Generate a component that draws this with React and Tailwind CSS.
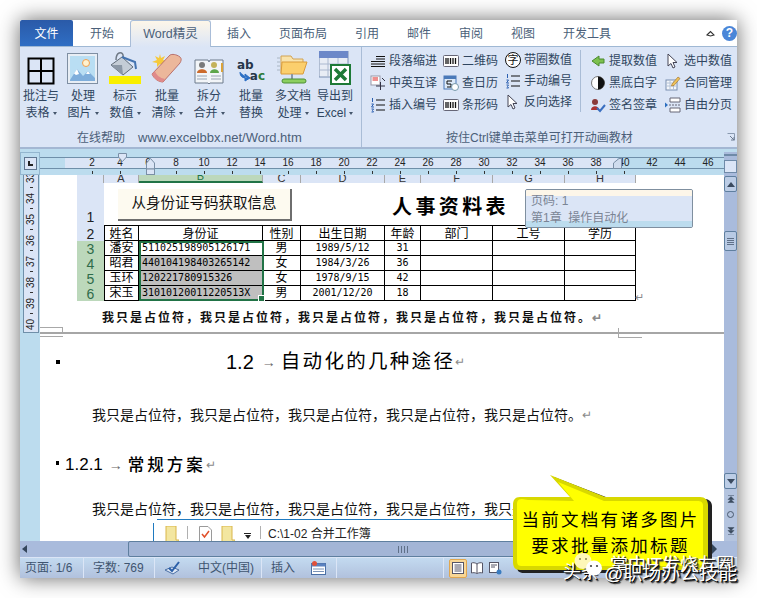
import React from "react";

const Grid = () => (
  <svg width="28" height="28" viewBox="0 0 28 28"><rect x="1.500" y="1.500" width="25" height="25" fill="none" stroke="#000" strokeWidth="2"/><path d="M14 1.500V26.500M1.500 14H26.500" stroke="#000" strokeWidth="2"/></svg>
);
const Pic = () => (
  <svg width="32" height="32" viewBox="0 0 32 32"><rect x=".5" y=".5" width="30" height="30" fill="#e8eef5" stroke="#7f8fa3"/><rect x="3" y="3" width="25" height="25" fill="#b9def3"/><circle cx="19" cy="10" r="3.500" fill="#fff3d0" stroke="#f0a050"/><path d="M3 27L10 16L16 23L21 18L28 25V28H3Z" fill="#7faedb"/><path d="M10 16L12 21L9 22L7 20.500ZM21 18L23 21L19 21Z" fill="#fff"/></svg>
);
const Bucket = () => (
  <svg width="34" height="34" viewBox="0 0 34 34"><path d="M8 9C8 1 14 0 15 4L16 12" fill="none" stroke="#707a86" strokeWidth="1.500"/><path d="M3 14L14 6L25 16L15 24Z" fill="#c4ccd6" stroke="#5f6b78"/><path d="M3 14L15 24L14 14Z" fill="#8b97a6"/><path d="M14 6L27 11L28 18" fill="none" stroke="#4473b0" strokeWidth="2"/><rect x="1" y="25" width="32" height="8" fill="#f9ef00"/></svg>
);
const Eraser = () => (
  <svg width="34" height="32" viewBox="0 0 34 32"><path d="M10 1L11 5L15 3L13 7L17 8L13 10L14 14L10 11L7 14L7 10L2 9L7 7L5 3L9 5Z" fill="#f6c93a"/><path d="M2 21L20 2C22 1 26 1 30 4C32 6 31 8 30 10L13 29C9 29 4 26 2 21Z" fill="#ecb79b" stroke="#b9706c"/><path d="M2 21C4 26 9 29 13 29L15 26C10 25 6 22 5 18Z" fill="#e08a8a"/></svg>
);
const Book = () => (
  <svg width="30" height="28" viewBox="0 0 30 28"><path d="M1 3H14L15 5L16 3H29V26H16L15 27L14 26H1Z" fill="#f2f5f8" stroke="#6d7a8c"/><circle cx="8" cy="8" r="3" fill="#7a7a7a"/><path d="M3 16C3 11 13 11 13 16Z" fill="#cc6a2b"/><circle cx="20" cy="8" r="3" fill="#c4b35a"/><path d="M16 16C16 11 25 11 25 16Z" fill="#5da64a"/><path d="M3 19H13M3 22H13M17 19H27M17 22H27" stroke="#9aa5b3"/><rect x="27" y="6" width="2" height="9" fill="#d9a23a"/></svg>
);
const Replace = () => (
  <div className="relative w-[28px] h-[28px] text-[#26364a] font-bold leading-none">
    <span className="absolute left-0 top-[2px] text-[12px] font-['DejaVu_Sans']">ab</span>
    <span className="absolute right-0 bottom-[3px] text-[12px] font-['DejaVu_Sans']">a<span className="text-[#2d7a3a]">c</span></span>
    <svg className="absolute left-[2px] top-[15px]" width="12" height="10" viewBox="0 0 12 10"><path d="M1 0C1 5 4 6 8 6M6 2L11 6L6 9Z" fill="#2c6fc4" stroke="#2c6fc4"/></svg>
  </div>
);
const FolderNet = () => (
  <svg width="32" height="32" viewBox="0 0 32 32"><path d="M4 3H14L16 6H26V20H4Z" fill="#f9e3ab" stroke="#d1a354"/><path d="M5 9H30L26 21H4Z" fill="#fbcf6d" stroke="#d99b3b"/><path d="M15 21V26" stroke="#8a97a6" strokeWidth="2"/><rect x="5" y="26" width="24" height="4" rx="2" fill="#8ccf60" stroke="#4d8f34"/><path d="M0 5H3M0 9H3M0 13H3M0 17H3" stroke="#a9b6c4"/></svg>
);
const XlsTable = () => (
  <svg width="32" height="34" viewBox="0 0 32 34"><rect x="0" y="0" width="29" height="26" fill="#e8edf5" stroke="#7a8fb2"/><rect x="0" y="0" width="29" height="7" fill="#6c88c8"/><path d="M0 13H29M0 19H29M9 7V26M19 7V26" stroke="#aab8cf"/><rect x="12" y="14" width="19" height="19" fill="#fff" stroke="#1e7a37" strokeWidth="2"/><path d="M16 18L27 29M27 18L16 29" stroke="#1e7a37" strokeWidth="3.500"/></svg>
);

const S = ({ children }) => <svg width="16" height="16" viewBox="0 0 16 16">{children}</svg>;
const Lines = () => <S><path d="M6 3.500H15M6 6H15M1 8.500H15M1 11H15M1 13.500H15" stroke="#111"/></S>;
const Barcode = () => <S><rect x=".5" y="2.500" width="15" height="11" rx="1" fill="#fff" stroke="#667"/><path d="M3 5V11M5 5V11M7.500 5V11M10 5V11M12.500 5V11" stroke="#111" strokeWidth="1.300"/></S>;
const Circled = () => (
  <div className="w-[16px] h-[16px] rounded-full border border-[#111] flex items-center justify-center text-[11px] leading-none text-[#111] bg-white">字</div>
);
const Trans = () => <S><rect x="1" y="1" width="9" height="9" fill="#fff" stroke="#99a"/><path d="M2.500 3H8M2.500 5H8" stroke="#d22"/><path d="M6 11H15M10.500 7V15M12 3L15 6" stroke="#334"/></S>;
const Calendar = () => <S><rect x="1" y="1" width="12" height="13" fill="#dce9f8" stroke="#4a79b8"/><rect x="1" y="1" width="12" height="3" fill="#4a79b8"/><path d="M4 6H9M4 6V9H8V12H4" fill="none" stroke="#111"/><circle cx="12" cy="12" r="3.500" fill="#fff" stroke="#79a"/></S>;
const NumList = () => (
  <S><path d="M2.500 1V5M1.500 7H3.500L1.500 10H4M1.500 12H3.500L2.500 13.500L3.500 15H1.500" fill="none" stroke="#2b5fb0"/><path d="M6 3H15M6 8H15M6 13H15" stroke="#111"/></S>
);
const Cursor = () => <S><path d="M3 1V13L6 10.500L8 15L10 14L8 9.500H12Z" fill="#fff" stroke="#445"/></S>;
const GreenArrow = () => <S><path d="M2 8L9 3V6H14V10H9V13Z" fill="#7cc04e" stroke="#4a8a2e"/></S>;
const Half = () => <S><circle cx="8" cy="8" r="6.500" fill="#fff" stroke="#777"/><path d="M8 1.500A6.500 6.500 0 0 1 8 14.500Z" fill="#111"/></S>;
const Sign = () => <S><circle cx="5" cy="5" r="3" fill="#8a3a3a"/><path d="M1 13C1 8 9 8 9 13Z" fill="#a33"/><path d="M7 11L10 14L15 8" fill="none" stroke="#3a6fc0" strokeWidth="2"/></S>;
const Contract = () => <S><rect x="1" y="5" width="11" height="10" fill="#f4f7fb" stroke="#7a8fb0"/><path d="M1 8H12M1 11H12M5 5V15M8.500 5V15" stroke="#b4c2d6"/><path d="M7 9L13 2L15 3.500L9 10.500L6.500 11Z" fill="#eec25a" stroke="#9c6a20" strokeWidth=".6"/></S>;
const PageBr = () => <S><path d="M5 1H15V5H5ZM5 11H15V15H5Z" fill="#fff" stroke="#667"/><path d="M4 8H15" stroke="#667" strokeDasharray="2 1"/><path d="M0 5.500L3 8L0 10.500Z" fill="#2b6fc0"/></S>;

const Big = ({ icon, a, b, caret }) => (
  <div className="w-[42px] flex flex-col items-center">
    <div className="h-[36px] flex items-end justify-center">{icon}</div>
    <div className="mt-[3px] text-[12px] leading-[17px] text-[#2f4560] text-center whitespace-nowrap">
      <div>{a}</div>
      <div className="flex items-center justify-center gap-[3px]">
        <span>{b}</span>
        {caret && <span className="w-0 h-0 border-x-[2.500px] border-x-transparent border-t-[3px] border-t-[#44556b]" />}
      </div>
    </div>
  </div>
);

const Small = ({ icon, t, w, iw = 16, gap = 3 }) => (
  <div className="h-[22px] flex items-center text-[12px] text-[#2f4560] whitespace-nowrap" style={{ width: w }}>
    <span className="flex justify-center shrink-0" style={{ width: iw, marginRight: gap }}>{icon}</span>
    {t}
  </div>
);
const SmallCol = ({ w, children, className = "" }) => <div className={`flex flex-col ${className}`} style={{ width: w }}>{children}</div>;

const rulerNums = Array.from({ length: 23 }, (_, i) => (i + 1) * 2);
const vNums = [33, 34, 35, 36, 37, 38, 39, 40];
const cols = [27, 35, 124, 38, 84, 36, 72, 72, 71];

const Mono = "font-['DejaVu_Sans_Mono'] text-[10px]";

const dataRows = [
  { n: "3", name: "潘安", id: "511025198905126171", sex: "男", date: "1989/5/12", age: "31" },
  { n: "4", name: "昭君", id: "440104198403265142", sex: "女", date: "1984/3/26", age: "36", g: true },
  { n: "5", name: "玉环", id: "120221780915326", sex: "女", date: "1978/9/15", age: "42", g: true },
  { n: "6", name: "宋玉", id: "31010120011220513X", sex: "男", date: "2001/12/20", age: "18", g: true },
];

const Cell = ({ w, className = "", children }) => (
  <div className={`h-full shrink-0 border-r border-b border-black flex items-center overflow-hidden leading-none text-black ${className}`} style={{ width: w }}>{children}</div>
);

const Hdr = ({ w, className = "", children }) => (
  <div className={`h-full shrink-0 border-r border-[#a8a8a8] flex items-end justify-center text-[11px] leading-[10px] overflow-hidden ${className}`} style={{ width: w }}>{children}</div>
);

const Ret = () => <span className="text-[#8a8a8a] text-[12px]">↵</span>;

const Folder = () => <svg width="14" height="17" viewBox="0 0 14 17"><path d="M1 0H11V14H14V17H1Z" fill="#f3e6a0" stroke="#d9b64a"/></svg>;

export default function App() {
  return (
    <div className="relative w-[757px] h-[598px] bg-white overflow-hidden pl-[20px] pt-[20px] font-['Liberation_Sans','Noto_Sans_CJK_SC',sans-serif]">
      <div className="w-[717px] h-[558px] flex flex-col shadow-[0_0_20px_rgba(0,0,0,0.6)] bg-white">
        {/* Tabs */}
        <div className="h-[26px] flex items-stretch bg-white text-[12px] text-[#4b5f79] relative">
          <div className="w-[53px] flex items-center justify-center text-white bg-linear-to-b from-[#2a5aa8] to-[#2f6ec4] rounded-t-[2px] pt-px">文件</div>
          <div className="px-[17px] pr-[16px] flex items-center pt-px">开始</div>
          <div className="w-[81px] h-[27px] flex items-center justify-center border border-b-0 border-[#a9bdd8] rounded-t-[3px] bg-linear-to-b from-[#fdf6e9] to-[#dbe5f6] relative z-10 text-[12.500px]">Word精灵</div>
          <div className="w-[2px]" />
          {["插入", "页面布局", "引用", "邮件", "审阅", "视图", "开发工具"].map((t) => (
            <div key={t} className="px-[14px] flex items-center pt-px">{t}</div>
          ))}
          <div className="flex-1" />
          <div className="flex items-center gap-[7px]">
            <svg width="9" height="7" viewBox="0 0 9 7"><path d="M1 5L4.500 1.500L8 5L4.500 6Z" fill="none" stroke="#333" strokeWidth="1.200"/></svg>
            <div className="w-[15px] h-[15px] rounded-full bg-[#4a86d8] text-white text-[12px] font-bold flex items-center justify-center">?</div>
          </div>
        </div>

        {/* Ribbon */}
        <div className="h-[103px] bg-[#dbe5f6] border-t border-[#9fb8d4] border-b-2 border-b-[#a3b7d3] flex relative">
          <div className="flex flex-col w-[342px] shrink-0 border-r border-[#a9bcd6]">
            <div className="flex pt-[2px]">
              <Big icon={<Grid />} a="批注与" b="表格" caret />
              <Big icon={<Pic />} a="处理" b="图片" caret />
              <Big icon={<Bucket />} a="标示" b="数值" caret />
              <Big icon={<Eraser />} a="批量" b="清除" caret />
              <Big icon={<Book />} a="拆分" b="合并" caret />
              <Big icon={<Replace />} a="批量" b="替换" />
              <Big icon={<FolderNet />} a="多文档" b="处理" caret />
              <Big icon={<XlsTable />} a="导出到" b="Excel" caret />
            </div>
            <div className="mt-auto pl-[57px] flex items-center text-[12px] leading-[18px] text-[#4b5f79] whitespace-nowrap">
              <span>在线帮助</span>
              <span className="ml-[13px] text-[13px]">www.excelbbx.net/Word.htm</span>
            </div>
          </div>
          <div className="flex-1 flex flex-col relative">
            <div className="flex pt-[3px] pl-[8px]">
              <SmallCol w={73}>
                <Small icon={<Lines />} t="段落缩进" w={73} />
                <Small icon={<Trans />} t="中英互译" w={73} />
                <Small icon={<NumList />} t="插入编号" w={73} />
              </SmallCol>
              <SmallCol w={62}>
                <Small icon={<Barcode />} t="二维码" w={62} />
                <Small icon={<Calendar />} t="查日历" w={62} />
                <Small icon={<Barcode />} t="条形码" w={62} />
              </SmallCol>
              <SmallCol w={76} className="border-r border-[#a9bcd6] h-[62px]">
                <Small icon={<Circled />} t="带圈数值" w={76} />
                <Small icon={<NumList />} t="手动编号" w={76} />
                <Small icon={<Cursor />} t="反向选择" w={76} />
              </SmallCol>
              <SmallCol w={84} className="pl-[9px]">
                <Small icon={<GreenArrow />} t="提取数值" w={75} />
                <Small icon={<Half />} t="黑底白字" w={75} />
                <Small icon={<Sign />} t="签名签章" w={75} />
              </SmallCol>
              <SmallCol w={66}>
                <Small icon={<Cursor />} t="选中数值" w={66} />
                <Small icon={<Contract />} t="合同管理" w={66} />
                <Small icon={<PageBr />} t="自由分页" w={66} />
              </SmallCol>
            </div>
            <div className="mt-auto pl-[84px] text-[12px] leading-[18px] text-[#4b5f79]">按住Ctrl键单击菜单可打开动画教材</div>
            <svg className="absolute right-[2px] bottom-[6px]" width="8" height="8" viewBox="0 0 8 8"><path d="M.5 .5H7.500V7.500" fill="none" stroke="#8a9ab0"/><path d="M3 3L7 7M4 7H7V4" fill="none" stroke="#6a7a90"/></svg>
          </div>
        </div>

        {/* Ruler */}
        <div className="h-[26px] shrink-0 flex bg-[#bcdcee] pt-[3px]">
          <div className="w-[20px] h-[23px] border border-[#93b6cf] flex items-center justify-center">
            <div className="w-[13px] h-[13px] border border-[#5f7590] bg-[#dbe5f6] flex items-center justify-center">
              <div className="w-[5px] h-[5px] border-l-2 border-b-2 border-[#222]" />
            </div>
          </div>
          <div className="w-[684px] relative">
            <div className="mt-[5px] h-[12px] flex border-y border-[#6f8fa9]">
              <div className="w-[25px]" />
              <div className="w-[552px] bg-[#dbe5f6]" />
            </div>
            <div className="absolute left-[38px] top-[5px] h-[12px] flex">
              {rulerNums.map((n) => (
                <div key={n} className="w-[28px] text-center text-[10px] leading-[12px] text-[#222]">{n}</div>
              ))}
            </div>
            <div className="ml-[38px] flex h-[6px] items-start pt-[2px]">
              {rulerNums.slice(0, 20).map((n) => (
                <div key={n} className="w-[28px] flex justify-center"><div className="w-px h-[3px] bg-[#333]" /></div>
              ))}
            </div>
            <svg className="absolute left-[78px] top-[1px]" width="9" height="9" viewBox="0 0 9 9"><path d="M.5 .5H8.500V4L4.500 8.500L.5 4Z" fill="#dbe5f6" stroke="#7a8fa6"/></svg>
            <svg className="absolute left-[106px] top-[6px]" width="9" height="17" viewBox="0 0 9 17"><path d="M4.500 .5L8.500 5V11H.5V5Z" fill="#dbe5f6" stroke="#7a8fa6"/><rect x=".5" y="11" width="8" height="5.500" fill="#dbe5f6" stroke="#7a8fa6"/></svg>
            <svg className="absolute left-[573px] top-[6px]" width="9" height="11" viewBox="0 0 9 11"><path d="M.5 10.500V5L6 .5H8.500V10.500Z" fill="#cfdcee" stroke="#7a8fa6"/></svg>
          </div>
          <div className="w-[13px] bg-[#a9bbdc] flex flex-col pt-[2px]">
            <div className="h-[2px] bg-[#6f8aa8]" />
            <div className="mt-[4px] h-[13px] border border-[#6f8aa8] bg-[#dbe5f6]" />
          </div>
        </div>

        {/* Body */}
        <div className="h-[366px] shrink-0 flex">
          <div className="w-[20px] bg-[#bcdcee] shrink-0">
            <div className="ml-[3px] w-[16px] h-[158px] bg-[#dbe5f6] border-x border-b border-[#6f8fa9] overflow-hidden">
              <div className="-mt-[8px] flex flex-col items-center">
                {vNums.map((n) => (
                  <div key={n} className="h-[21px] flex flex-col items-center">
                    <div className="h-[20px] flex items-center justify-center text-[10px] leading-none text-[#222] [writing-mode:vertical-rl] rotate-180">{n}</div>
                    <div className="h-px w-[3px] bg-[#333]" />
                  </div>
                ))}
              </div>
            </div>
          </div>

          <div className="w-[684px] shrink-0 bg-white overflow-hidden relative">
            {/* Sheet */}
            <div className="ml-[37px] w-[559px]">
              <div className="h-[8px] flex bg-[#dbe5f6] text-[#333]">
                <Hdr w={cols[0]} />
                <Hdr w={cols[1]}>A</Hdr>
                <Hdr w={cols[2]} className="bg-[#bcd8bb] border-b-2 border-b-[#217346] text-[#217346]">B</Hdr>
                <Hdr w={cols[3]}>C</Hdr>
                <Hdr w={cols[4]}>D</Hdr>
                <Hdr w={cols[5]}>E</Hdr>
                <Hdr w={cols[6]}>F</Hdr>
                <Hdr w={cols[7]}>G</Hdr>
                <Hdr w={cols[8]}>H</Hdr>
              </div>
              <div className="h-[43px] flex">
                <div className="shrink-0 bg-[#dbe5f6] flex items-end justify-center text-[14px] leading-[17px] text-[#222]" style={{ width: cols[0] }}>1</div>
                <div className="flex-1 border-b border-black flex items-start">
                  <div className="ml-[14px] mt-[6px] w-[172px] h-[30px] bg-[#fdfaf0] shadow-[1px_1px_0_1px_#6e6e6e] flex items-center justify-center text-[14.500px] text-[#111] whitespace-nowrap">从身份证号码获取信息</div>
                  <div className="ml-[102px] mt-[10px] text-[20px] leading-[28px] font-bold tracking-[3.400px] text-black whitespace-nowrap">人事资料表</div>
                </div>
              </div>
              <div className="h-[15px] flex text-[12px]">
                <div className="shrink-0 bg-[#dbe5f6] flex items-center justify-center text-[14px] leading-none text-[#222]" style={{ width: cols[0] }}>2</div>
                {["姓名", "身份证", "性别", "出生日期", "年龄", "部门", "工号", "学历"].map((t, i) => (
                  <Cell key={t} w={cols[i + 1]} className={`justify-center pt-[1px] ${i === 0 ? "border-l" : ""}`}>{t}</Cell>
                ))}
              </div>
              <div className="relative">
                {dataRows.map((r) => (
                  <div key={r.n} className="h-[15px] flex text-[12px]">
                    <div className="shrink-0 bg-[#bcd8bb] flex items-center justify-center text-[14px] leading-none text-[#2f6b4a]" style={{ width: cols[0] }}>{r.n}</div>
                    <Cell w={cols[1]} className="justify-center border-l">{r.name}</Cell>
                    <Cell w={cols[2]} className={`pl-[3px] ${Mono} ${r.g ? "bg-[#bfbfbf]" : ""}`}>{r.id}</Cell>
                    <Cell w={cols[3]} className="justify-center">{r.sex}</Cell>
                    <Cell w={cols[4]} className={`justify-center ${Mono}`}>{r.date}</Cell>
                    <Cell w={cols[5]} className={`justify-center ${Mono}`}>{r.age}</Cell>
                    <Cell w={cols[6]} />
                    <Cell w={cols[7]} />
                    <Cell w={cols[8]} />
                  </div>
                ))}
                <div className="absolute left-[62px] top-0 w-[125px] h-[60px] border-2 border-[#217346]" />
                <div className="absolute left-[182px] top-[55px] w-[5px] h-[5px] bg-[#217346] outline outline-white" />
                <span className="absolute left-[558px] top-[50px] text-[#8a8a8a] text-[11px] leading-[12px]">↵</span>
              </div>
            </div>
            <div className="ml-[62px] mt-[9px] h-[16px] flex items-center text-[12px] font-bold tracking-[2px] text-[#111] whitespace-nowrap">我只是占位符，我只是占位符，我只是占位符，我只是占位符，我只是占位符。<Ret /></div>

            {/* Page break */}
            <div className="relative h-[7px] mt-[2px]">
              <div className="absolute left-0 top-[-1px] w-[23px] h-[5px] border-r border-t border-[#a8a8a8]" />
              <div className="absolute left-0 top-[8px] w-[23px] h-px bg-[#a8a8a8]" />
              <div className="absolute left-0 right-0 top-[4px] h-[2px] bg-[#a6a6a6]" />
              <div className="absolute left-[578px] top-0 w-px h-[9px] bg-[#a8a8a8]" />
              <div className="absolute left-[578px] top-[9px] w-[24px] h-px bg-[#a8a8a8]" />
            </div>

            <div className="relative h-[28px] mt-[13px] flex items-center text-black whitespace-nowrap">
              <div className="absolute left-[16px] top-[12px] w-[4px] h-[4px] bg-black" />
              <span className="ml-[186px] text-[20px]">1.2</span>
              <span className="ml-[8px] w-[19px] text-[14px] text-[#666]">→</span>
              <span className="text-[19.500px] tracking-[2.300px]">自动化的几种途径</span>
              <Ret />
            </div>
            <div className="ml-[52px] mt-[29px] h-[20px] flex items-center text-[14px] text-[#111] whitespace-nowrap">我只是占位符，我只是占位符，我只是占位符，我只是占位符，我只是占位符。<Ret /></div>

            <div className="relative h-[26px] mt-[27px] flex items-center text-black whitespace-nowrap">
              <div className="absolute left-[16px] top-[9px] w-[3px] h-[4px] bg-black" />
              <span className="ml-[25px] text-[17px]">1.2.1</span>
              <span className="ml-[6px] w-[19px] text-[14px] text-[#666]">→</span>
              <span className="text-[16.500px] font-medium tracking-[3px]">常规方案</span>
              <Ret />
            </div>
            <div className="ml-[52px] mt-[21px] h-[20px] flex items-center text-[14px] text-[#111] whitespace-nowrap">我只是占位符，我只是占位符，我只是占位符，我只是占位符，我只是占位符。</div>

            <div className="ml-[117px] h-px w-[516px] bg-[#1f7ac0]" />
            <div className="ml-[113px] mt-[3px] h-[22px] pt-[3px] pl-[11px] border-l border-[#1f7ac0] flex items-start whitespace-nowrap">
              <Folder />
              <div className="ml-[8px] h-[13px] border-l border-[#b0b0b0]" />
              <svg className="ml-[11px]" width="13" height="17" viewBox="0 0 13 17"><path d="M.5 .5H9L12.500 4V16.500H.5Z" fill="#fff" stroke="#9a9a9a"/><path d="M3 8L5.500 11L10 5" fill="none" stroke="#e0502a" strokeWidth="1.500"/></svg>
              <div className="ml-[9px]"><Folder /></div>
              <div className="ml-[9px] mt-[7px] flex flex-col items-center gap-[1px]">
                <div className="w-[7px] h-px bg-[#222]" />
                <div className="w-0 h-0 border-x-[3.500px] border-x-transparent border-t-[4px] border-t-[#222]" />
              </div>
              <div className="ml-[9px] h-[13px] border-l border-[#b0b0b0]" />
              <div className="ml-[7px] text-[12px] leading-[16px] text-[#222]">C:\1-02 合并工作簿</div>
            </div>
          </div>

          {/* V scrollbar */}
          <div className="w-[13px] shrink-0 bg-[#a9bbdc] flex flex-col items-stretch">
            <div className="mt-[1px] h-[16px] border border-[#5f7f9f] rounded-[2px] bg-[#bccde6] flex items-center justify-center">
              <div className="w-0 h-0 border-x-[4px] border-x-transparent border-b-[5px] border-b-[#3a4a5f]" />
            </div>
            <div className="mt-[39px] h-[20px] border border-[#5f7f9f] rounded-[2px] bg-[#b8cae4] flex flex-col items-center justify-center gap-[1px]">
              <div className="w-[7px] h-px bg-[#5f7088]" /><div className="w-[7px] h-px bg-[#5f7088]" /><div className="w-[7px] h-px bg-[#5f7088]" /><div className="w-[7px] h-px bg-[#5f7088]" />
            </div>
            <div className="mt-[222px] h-[16px] border border-[#5f7f9f] rounded-[2px] bg-[#bccde6] flex items-center justify-center">
              <div className="w-0 h-0 border-x-[4px] border-x-transparent border-t-[5px] border-t-[#3a4a5f]" />
            </div>
            <div className="flex-1 bg-[#b4c4df] flex flex-col items-center justify-around pb-[2px] pt-[2px]">
              <svg width="8" height="8" viewBox="0 0 8 8"><path d="M1 .5H7M4 1.500L7 4.500H1ZM4 4.500L7 7.500H1Z" fill="#3a4a5f" stroke="#3a4a5f" strokeWidth=".5"/></svg>
              <div className="w-[7px] h-[7px] rounded-full border border-[#4a5a70]" />
              <svg width="8" height="8" viewBox="0 0 8 8"><path d="M1 7.500H7M4 6.500L7 3.500H1ZM4 3.500L7 .5H1Z" fill="#3a4a5f" stroke="#3a4a5f" strokeWidth=".5"/></svg>
            </div>
          </div>
        </div>

        {/* H scrollbar */}
        <div className="h-[17px] shrink-0 flex bg-[#a9bbdc] border-b border-[#dbe5f6]">
          <div className="w-[108px] flex items-center pl-[2px]">
            <div className="w-0 h-0 border-y-[4px] border-y-transparent border-r-[5px] border-r-[#34465c]" />
          </div>
          <div className="w-[582px] h-[16px] border border-[#5f7f9f] rounded-[2px] bg-[#a3b5d6] flex items-center justify-center gap-px pr-[32px]">
            <div className="w-px h-[7px] bg-[#5f7088]" /><div className="w-px h-[7px] bg-[#5f7088] ml-px" /><div className="w-px h-[7px] bg-[#5f7088] ml-px" /><div className="w-px h-[7px] bg-[#5f7088] ml-px" />
          </div>
          <div className="flex-1 flex items-center pl-[2px]">
            <div className="w-0 h-0 border-y-[5px] border-y-transparent border-l-[5px] border-l-[#34465c]" />
          </div>
        </div>

        {/* Status */}
        <div className="flex-1 flex items-center bg-linear-to-b from-[#c3daf0] to-[#b1c1dd] text-[12px] text-[#3f5570] whitespace-nowrap">
          <div className="w-[64px] pl-[5px] h-full flex items-center border-r border-[#dbe5f6]">页面: 1/6</div>
          <div className="w-[71px] pl-[9px] h-full flex items-center border-r border-[#dbe5f6]">字数: 769</div>
          <div className="w-[107px] pl-[9px] h-full flex items-center border-r border-[#dbe5f6]">
            <svg width="17" height="14" viewBox="0 0 17 14"><path d="M1 9L8 6L15 9L9 13Z" fill="#dfe8f5" stroke="#4a6fa5"/><path d="M5 7L8 10L15 1" fill="none" stroke="#2b5fa8" strokeWidth="2"/></svg>
            <span className="ml-[17px]">中文(中国)</span>
          </div>
          <div className="w-[75px] pl-[9px] h-full flex items-center border-r border-[#dbe5f6]">
            插入
            <svg className="ml-[16px]" width="15" height="14" viewBox="0 0 15 14"><rect x=".5" y="2.500" width="14" height="11" fill="#fff" stroke="#4a6fa5"/><rect x=".5" y="2.500" width="14" height="3" fill="#5b82c0"/><path d="M2 8H13M2 10.500H13" stroke="#7a93b8"/><circle cx="3.500" cy="2.500" r="2.500" fill="#e0503a"/></svg>
          </div>
          <div className="w-[106px] h-full" />
          <div className="h-full border-l border-[#dbe5f6] pl-[5px] flex items-center">
            <div className="w-[18px] h-[19px] rounded-[2px] bg-[#f8d796] border border-[#e0a650] flex items-center justify-center">
              <svg width="12" height="12" viewBox="0 0 12 12"><rect x=".5" y=".5" width="11" height="11" fill="#fff" stroke="#556"/><path d="M2.500 3H9.500M2.500 5H9.500M2.500 7H9.500M2.500 9H9.500" stroke="#556"/></svg>
            </div>
            <svg className="ml-[4px]" width="12" height="12" viewBox="0 0 12 12"><path d="M6 2C4 .5 2 .5 .5 1V11C2 10.500 4 10.500 6 11.500C8 10.500 10 10.500 11.500 11V1C10 .5 8 .5 6 2Z" fill="#fff" stroke="#556"/><path d="M6 2V11" stroke="#556"/></svg>
            <svg className="ml-[6px]" width="13" height="13" viewBox="0 0 13 13"><rect x=".5" y=".5" width="9" height="10" fill="#fff" stroke="#556"/><path d="M2 3H8M2 5H6" stroke="#556"/><circle cx="10" cy="10" r="2.500" fill="#3a7cc0"/></svg>
          </div>
        </div>
      </div>

      {/* Page tooltip */}
      <div className="absolute left-[525px] top-[189px] w-[168px] h-[39px] rounded-[2px] border border-[#7f8f9f] bg-[#dbe5f6] overflow-hidden text-[12px] leading-[17px] text-[#7a8494]">
        <div className="absolute left-0 right-0 top-0 h-[6px] bg-[#fdf6e9]" />
        <div className="absolute left-0 right-0 bottom-0 h-[6px] bg-[#bcdcee]" />
        <div className="relative pl-[5px] pt-[3px]">页码: 1</div>
        <div className="relative pl-[5px] whitespace-pre">第1章  操作自动化</div>
      </div>

      {/* Callout */}
      <svg className="absolute left-[508px] top-[470px]" width="215" height="108" viewBox="0 0 215 108">
        <path d="M12 30C7 30 6 32 6 36V94C6 99 8 101 13 101H194C199 101 201 99 201 94V34C201 30 198 27 194 27H100L43 5L63 27H20Z" fill="#222" transform="translate(3,2)"/>
        <path d="M12 27C7 27 5 30 5 35V92C5 97 7 100 12 100H192C197 100 200 97 200 92V35C200 30 197 27 192 27H97L42 5L62 27Z" fill="#d8d800"/>
        <path d="M14 29C9 29 9 32 9 36V90C9 95 10 96 15 96H188C193 96 195 95 195 90V36C195 32 193 31 189 31H96L50 12L66 31L20 30Z" fill="#ffff00"/>
      </svg>
      <div className="absolute left-[513px] top-[507px] w-[195px] text-center text-[17.500px] leading-[26px] tracking-[2.300px] text-black whitespace-nowrap">
        <div>当前文档有诸多图片</div>
        <div>要求批量添加标题</div>
      </div>

      {/* Watermark */}
      <div className="absolute left-[610px] top-[554px] text-[18px] leading-[22px] text-white [text-shadow:1px_1px_0_#222,2px_2px_1px_#444] whitespace-nowrap">掌中IT发烧友圈</div>
      <div className="absolute left-[563px] top-[560px] text-[18px] leading-[24px] text-white [text-shadow:1px_1px_0_#000,2px_2px_1px_#333] whitespace-nowrap">头条</div>
      <div className="absolute left-[604px] top-[562px] text-[19px] leading-[24px] text-white [text-shadow:1px_1px_0_#000,2px_2px_1px_#333] whitespace-nowrap">@职场办公技能</div>
      <svg className="absolute left-[573px] top-[552px]" width="32" height="27" viewBox="0 0 32 27">
        <ellipse cx="10" cy="9" rx="8.500" ry="8" fill="#fdf7b8"/>
        <circle cx="7" cy="7" r="1" fill="#8a8450"/><circle cx="13" cy="7" r="1" fill="#8a8450"/>
        <ellipse cx="21" cy="16" rx="8" ry="7.500" fill="#fff"/>
        <path d="M16 22L15 25L19 23Z" fill="#fff"/>
        <circle cx="18" cy="14" r="1.100" fill="#444"/><circle cx="24" cy="14" r="1.100" fill="#444"/>
      </svg>
    </div>
  );
}
